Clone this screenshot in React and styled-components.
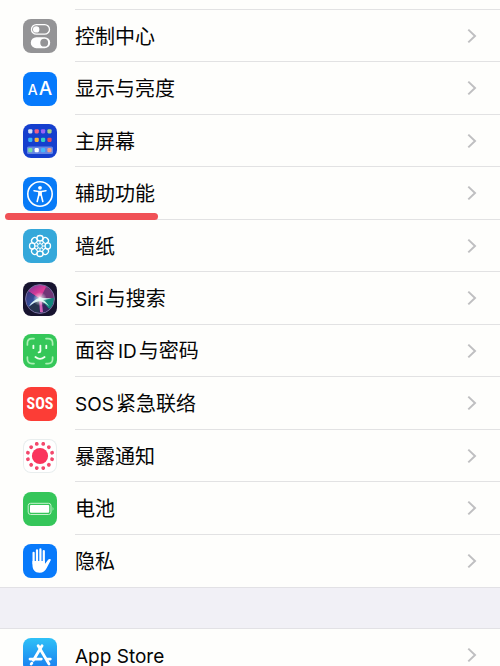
import React from "react";
import styled, { createGlobalStyle } from "styled-components";

const Global = createGlobalStyle`
  body { margin: 0; background: #fefefc; }
`;

const Screen = styled.main`
  height: 100vh;
  overflow: hidden;
  background: #fefefc;
  color: #050505;
  font-family: Inter, "Noto Sans CJK SC", sans-serif;
  font-size: 20px;
  line-height: 28px;
`;

const PreviousRow = styled.div`
  height: 9px;
  margin-left: 75px;
  border-bottom: 1px solid #e2e2e3;
`;

const List = styled.ul`
  list-style: none;
  margin: 0;
  padding: 0;
`;

const Item = styled.li`
  position: relative;
  height: 52px;
  &:nth-child(even) { height: 53px; }
`;

const RowLink = styled.a`
  display: flex;
  height: 100%;
  padding-left: 23px;
  gap: 18px;
  color: inherit;
  text-decoration: none;
`;

const IconTile = styled.span`
  flex: none;
  align-self: center;
  display: flex;
  align-items: center;
  justify-content: center;
  width: 34px;
  height: 34px;
  border-radius: 8px;
  overflow: hidden;
  color: #fff;
  background: ${(p) => p.$fill};
  box-shadow: ${(p) => (p.$outlined ? "inset 0 0 0 1px #e9eeee" : "none")};
  svg { display: block; }
`;

const RowBody = styled.span`
  flex: 1;
  display: flex;
  align-items: center;
  justify-content: space-between;
  padding-right: 23px;
  border-bottom: ${(p) => (p.$last ? "none" : "1px solid #e2e2e3")};
`;

const Label = styled.span`
  padding-top: 2px;
`;

const Latin = styled.span`
  font-size: 19px;
  margin-right: ${(p) => (p.$joined ? "2px" : "0")};
  margin-left: ${(p) => (p.$after ? "3px" : "0")};
`;

const SectionGap = styled.div`
  height: 40px;
  background: #f1f0f6;
  border-top: 1px solid #e2e1e5;
  border-bottom: 1px solid #e2e1e5;
`;

const Marker = styled.span`
  position: absolute;
  left: 5px;
  bottom: 0;
  width: 153px;
  height: 7px;
  border-radius: 4px;
  background: #f05156;
  pointer-events: none;
`;

const Letters = styled.span`
  display: flex;
  align-items: baseline;
  gap: 1px;
  padding-top: 2px;
  line-height: 20px;
`;

const Letter = styled.span`
  font-size: ${(p) => (p.$big ? "19px" : "14px")};
  font-weight: 500;
`;

const SosText = styled.span`
  font-family: "Liberation Sans Narrow", "Roboto Condensed", Roboto, sans-serif;
  font-size: 16px;
  font-weight: 700;
`;

const Art = ({ children }) => (
  <svg width="34" height="34" viewBox="0 0 34 34" fill="none" aria-hidden="true">
    {children}
  </svg>
);

const Chevron = () => (
  <svg width="10" height="16" viewBox="0 0 10 16" fill="none" aria-hidden="true">
    <path d="M1.3 1.6 8 8l-6.7 6.4" stroke="#bfbfc1" strokeWidth="2" />
  </svg>
);

const ControlArt = () => (
  <Art>
    <rect x="8.5" y="5.6" width="18" height="9.6" rx="4.8" stroke="#fff" strokeWidth="1.3" />
    <circle cx="13.2" cy="10.4" r="3.2" fill="#fff" />
    <rect x="7.8" y="18.2" width="19.4" height="11" rx="5.5" fill="#fff" />
    <circle cx="21.2" cy="23.7" r="3.9" fill="#949496" />
  </Art>
);

const appColors = [
  ["#d5dff8", "#ef5f85", "#9a62f3", "#a6cf84"],
  ["#35b2f6", "#f6b63f", "#35cfc0", "#e2495d"],
  ["#75dda4", "#ffffff", "#45b8fb", "#f19a86"],
];

const HomeArt = () => (
  <Art>
    <rect x="4" y="22.4" width="26" height="7.6" rx="1.6" fill="#6485e4" />
    {appColors.map((row, r) =>
      row.map((color, c) => (
        <rect key={`${r}-${c}`} x={5.2 + c * 6.4} y={[5.2, 13.7, 24.1][r]} width="4.2" height="4.2" rx="1.1" fill={color} />
      ))
    )}
  </Art>
);

const AccessArt = () => (
  <Art>
    <circle cx="17" cy="17" r="12.2" stroke="#fff" strokeWidth="1.6" />
    <circle cx="17" cy="10.8" r="1.9" fill="#fff" />
    <path d="M11 13.7 15.5 14.6h3L23 13.7" stroke="#fff" strokeWidth="1.5" strokeLinecap="round" />
    <path d="M15.1 14h3.8v4.8h-3.8z" fill="#fff" />
    <path d="m15.8 18-1.6 6.5M18.2 18l1.6 6.5" stroke="#fff" strokeWidth="1.6" strokeLinecap="round" />
  </Art>
);

const WallpaperArt = () => (
  <Art>
    {[0, 45, 90, 135, 180, 225, 270, 315].map((a) => (
      <g key={a} transform={`rotate(${a} 17 17)`} stroke="#fff">
        <ellipse cx="17" cy="9.2" rx="3.1" ry="2.7" strokeWidth="1.3" />
        <path d="M17 12v2.6" strokeWidth="1" />
      </g>
    ))}
    <circle cx="17" cy="17" r="2.4" stroke="#fff" strokeWidth="1" />
  </Art>
);

const SiriArt = () => (
  <Art>
    <defs>
      <radialGradient id="siriGlow">
        <stop offset="0" stopColor="#fff" />
        <stop offset=".25" stopColor="#fff" stopOpacity=".7" />
        <stop offset="1" stopColor="#fff" stopOpacity="0" />
      </radialGradient>
      <linearGradient id="siriPink" x1="0" y1="0" x2="1" y2="1">
        <stop stopColor="#74369d" />
        <stop offset=".55" stopColor="#dc3b96" />
        <stop offset="1" stopColor="#ae3a91" />
      </linearGradient>
      <linearGradient id="siriBlue" x1="0" y1="0" x2="1" y2="1">
        <stop stopColor="#403075" />
        <stop offset="1" stopColor="#2769b8" />
      </linearGradient>
    </defs>
    <circle cx="17" cy="17" r="14.4" fill="#292653" />
    <path d="M17 17 5 9C9 3 19 0 25 6l-2 6Z" fill="url(#siriPink)" />
    <path d="M17 17 5 9C1 15 2 21 6 25Z" fill="url(#siriBlue)" />
    <path d="M17 17 23 5c7 3 9 9 8 12Z" fill="#703777" />
    <path d="m17 17 14-1c0 5-2 9-5 11Z" fill="#12877c" />
    <path d="m17 17 9 10c-3 3-6 4-9 4Z" fill="#35265f" />
    <path d="M17 17 6 25c3 4 6 6 10 6Z" fill="#26354e" />
    <path d="m16 17 1 13c1 .6 2.200.4 3 0L18.500 17Z" fill="#d062b6" />
    <circle cx="17" cy="17" r="7" fill="url(#siriGlow)" />
    <path d="m15.500 14.500 1 1.600C12 17.500 8 20.500 6 24.500c3.500-3 7-5 11-5.500 3.500 1 6.500 3 9 5.500-1.500-3-3.500-5-6-6.500l9-1.500-9.500-.6Z" fill="#e8fff9" fillOpacity=".9" />
    <circle cx="17" cy="17" r="14.4" stroke="#776f9f" strokeWidth="1" />
  </Art>
);

const FaceArt = () => (
  <Art>
    <g stroke="#aaf0b4" strokeWidth="1.7" strokeLinecap="round">
      <path d="M4.4 11V9c0-3 1.6-4.4 4.6-4.4h2M23 4.6h2c3 0 4.6 1.5 4.6 4.4v2M29.6 23v2c0 3-1.6 4.6-4.6 4.6h-2M11 29.6H9c-3 0-4.6-1.6-4.6-4.6v-2" />
    </g>
    <g stroke="#effff0" strokeWidth="1.8" strokeLinecap="round">
      <path d="M10.4 11.6v2.6M23.3 11.6v2.6M17.4 11.6v5.2c0 1.2-.6 1.6-1.8 1.6M12.4 23c2.8 2.2 6.4 2.2 9.2 0" />
    </g>
  </Art>
);

const ExposureArt = () => (
  <Art>
    <circle cx="17" cy="17" r="8.1" fill="#fa345d" />
    {Array.from({ length: 12 }, (_, i) => (
      <circle key={i} cx="17" cy="4.5" r="1.9" fill="#f3486c" transform={`rotate(${15 + i * 30} 17 17)`} />
    ))}
  </Art>
);

const BatteryArt = () => (
  <Art>
    <rect x="5.2" y="11.3" width="22.8" height="11.2" rx="2.4" stroke="#c9f2d0" strokeWidth="1" />
    <rect x="7" y="13.1" width="19.2" height="7.6" rx="1" fill="#fff" />
    <path d="M29.6 15v3.8c1.1-.7 1.1-3.1 0-3.8Z" fill="#c9f2d0" />
  </Art>
);

const HandArt = () => (
  <Art>
    <g stroke="#fff" strokeWidth="2.2" strokeLinecap="round">
      <path d="M10.6 8.8v11M14 6.3V19M17.4 5.4V19M20.8 7v13" />
    </g>
    <path d="M9.5 17h12.4v3.1l3-4.1c.8-1.1 2.2-1.2 2.8-.5.2.3.1.6-.1 1L23.7 24c-1.5 3.2-3.8 4.7-7 4.7-5 0-7.2-3.2-7.2-7.5Z" fill="#fff" />
  </Art>
);

const StoreArt = () => (
  <Art>
    <g stroke="#fff" strokeWidth="2.8" strokeLinecap="round">
      <path d="m15.2 7.8 10.8 18.2M19 7.8 10.4 22.3M8.8 25.1l-.6 1M7 21.1h11.3M24.4 21.1h2.900" />
    </g>
  </Art>
);

const settings = [
  { label: "控制中心", fill: "#949496", icon: <ControlArt /> },
  {
    label: "显示与亮度",
    fill: "#067afc",
    icon: <Letters aria-hidden="true"><Letter>A</Letter><Letter $big>A</Letter></Letters>,
  },
  { label: "主屏幕", fill: "#153fce", icon: <HomeArt /> },
  { label: "辅助功能", fill: "#087bf7", icon: <AccessArt />, marked: true },
  { label: "墙纸", fill: "#35a8da", icon: <WallpaperArt /> },
  { label: <><Latin $joined>Siri</Latin>与搜索</>, fill: "#17142f", icon: <SiriArt /> },
  { label: <>面容<Latin $joined $after>ID</Latin>与密码</>, fill: "#35c759", icon: <FaceArt /> },
  { label: <><Latin $joined>SOS</Latin>紧急联络</>, fill: "#fc3d36", icon: <SosText aria-hidden="true">SOS</SosText> },
  { label: "暴露通知", fill: "#fff", outlined: true, icon: <ExposureArt /> },
  { label: "电池", fill: "#35c65a", icon: <BatteryArt /> },
  { label: "隐私", fill: "#087afb", icon: <HandArt /> },
];

const stores = [
  { label: <Latin>App Store</Latin>, fill: "linear-gradient(#2fc1f7, #1778ef)", icon: <StoreArt /> },
];

const SettingsList = ({ rows }) => (
  <List>
    {rows.map((row, i) => (
      <Item key={i}>
        <RowLink href="#">
          <IconTile $fill={row.fill} $outlined={row.outlined}>{row.icon}</IconTile>
          <RowBody $last={i === rows.length - 1}>
            <Label>{row.label}</Label>
            <Chevron />
          </RowBody>
        </RowLink>
        {row.marked && <Marker />}
      </Item>
    ))}
  </List>
);

export default function App() {
  return (
    <>
      <Global />
      <Screen>
        <PreviousRow />
        <SettingsList rows={settings} />
        <SectionGap />
        <SettingsList rows={stores} />
      </Screen>
    </>
  );
}
